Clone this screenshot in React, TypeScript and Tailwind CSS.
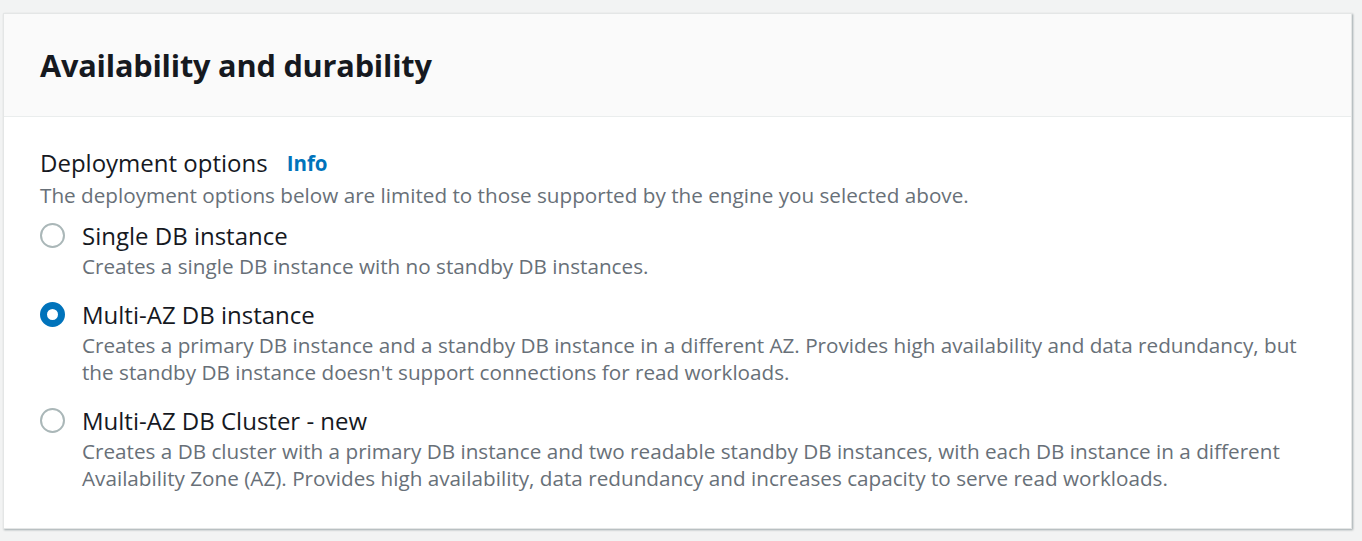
const options = [
  {
    label: "Single DB instance",
    desc: ["Creates a single DB instance with no standby DB instances."],
    checked: false,
  },
  {
    label: "Multi-AZ DB instance",
    desc: [
      "Creates a primary DB instance and a standby DB instance in a different AZ. Provides high availability and data redundancy, but",
      "the standby DB instance doesn't support connections for read workloads.",
    ],
    checked: true,
  },
  {
    label: "Multi-AZ DB Cluster - new",
    desc: [
      "Creates a DB cluster with a primary DB instance and two readable standby DB instances, with each DB instance in a different",
      "Availability Zone (AZ). Provides high availability, data redundancy and increases capacity to serve read workloads.",
    ],
    checked: false,
  },
];

function Radio({ checked }: { checked: boolean }) {
  return checked ? (
    <span className="mt-[5px] box-border block h-[25px] w-[25px] shrink-0 rounded-full border-[7px] border-[#0073bb] bg-white" />
  ) : (
    <span className="mt-[5px] box-border block h-[25px] w-[25px] shrink-0 rounded-full border-2 border-[#aab7b8] bg-white" />
  );
}

export default function App() {
  return (
    <div className="h-[541px] w-[1362px] overflow-hidden bg-[#f2f3f3] pt-[13px] pl-[3px] font-['Open_Sans',sans-serif]">
      <div className="w-[1349px] border border-[#e4e6e6] bg-white shadow-[1px_1px_2px_rgba(0,28,36,0.35)]">
        <div className="h-[103px] border-b border-[#eaeded] bg-[#fafafa] px-[36px] pt-[31px]">
          <h2 className="text-[30.7px] font-bold leading-[40px] tracking-[-0.2px] text-[#16191f]">Availability and durability</h2>
        </div>
        <div className="px-[36px] pt-[30px] pb-[36px]">
          <div className="flex items-center gap-[19px] leading-[32px]">
            <span className="text-[24px] text-[#16191f]">Deployment options</span>
            <span className="text-[20.5px] font-bold text-[#0073bb]">Info</span>
          </div>
          <p className="text-[20.7px] leading-[32px] text-[#687078]">
            The deployment options below are limited to those supported by the engine you selected above.
          </p>
          <div className="mt-[7px] flex flex-col gap-[17px]">
            {options.map((o) => (
              <div key={o.label} className="flex gap-[17px]">
                <Radio checked={o.checked} />
                <div>
                  <div className="text-[24px] leading-[35px] text-[#16191f]">{o.label}</div>
                  {o.desc.map((d) => (
                    <div key={d} className="whitespace-nowrap text-[20.7px] leading-[27px] text-[#687078]">{d}</div>
                  ))}
                </div>
              </div>
            ))}
          </div>
        </div>
      </div>
    </div>
  );
}
